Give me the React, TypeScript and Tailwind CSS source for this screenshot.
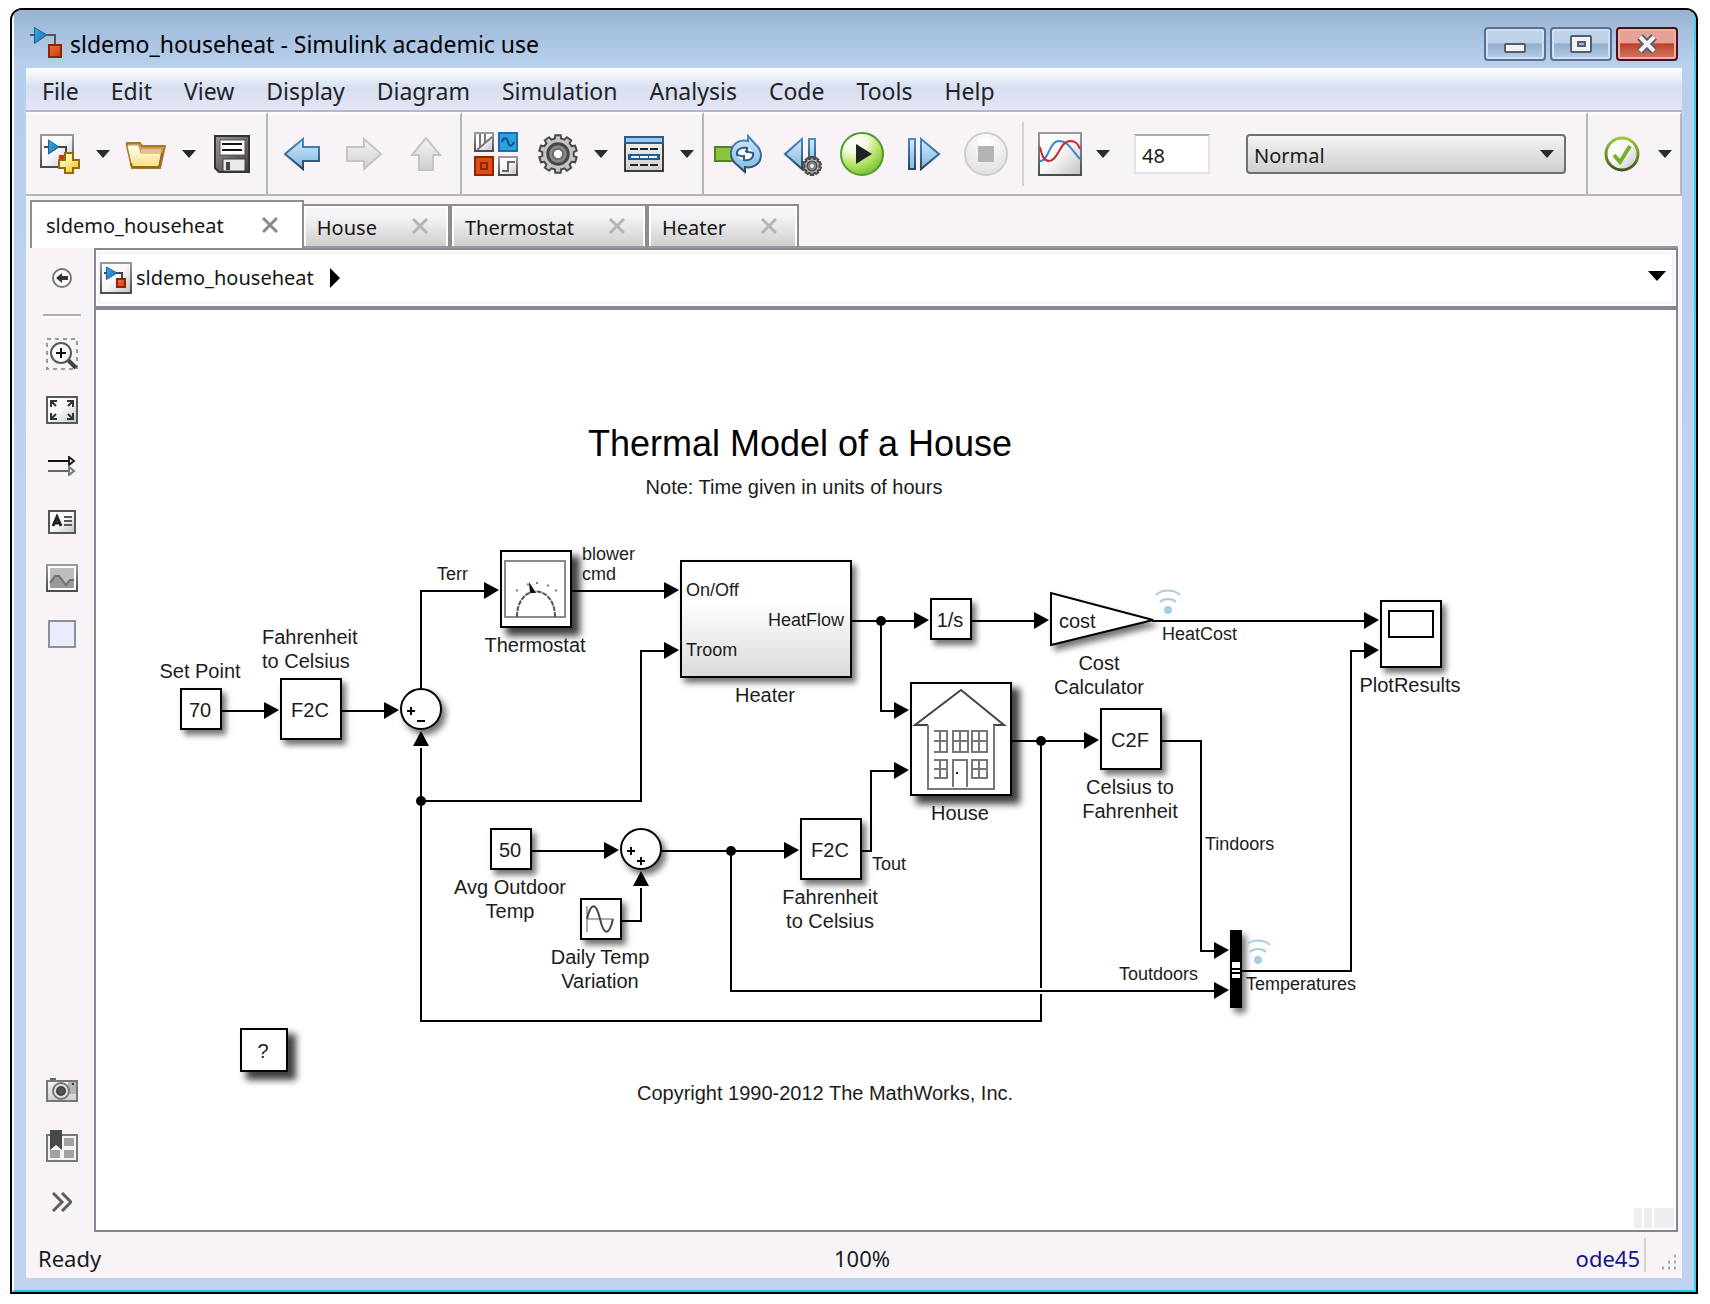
import React from "react";

/* ---------- icons ---------- */

function Defs() {
  return (
    <svg width="0" height="0" className="absolute" aria-hidden="true">
      <defs>
        <linearGradient id="blueV" x1="0" y1="0" x2="0" y2="1">
          <stop offset="0" stopColor="#d3e8f7" />
          <stop offset="1" stopColor="#7fb8e2" />
        </linearGradient>
        <linearGradient id="blueEdge" x1="0" y1="0" x2="0" y2="1">
          <stop offset="0" stopColor="#4a8cc4" />
          <stop offset="1" stopColor="#2c4560" />
        </linearGradient>
        <linearGradient id="blueTri" x1="0" y1="0" x2="1" y2="1">
          <stop offset="0" stopColor="#3fa9e0" />
          <stop offset="1" stopColor="#1a6fb0" />
        </linearGradient>
        <linearGradient id="redSq" x1="0" y1="0" x2="1" y2="1">
          <stop offset="0" stopColor="#f0744a" />
          <stop offset="1" stopColor="#c93c08" />
        </linearGradient>
        <linearGradient id="paper" x1="0" y1="0" x2="1" y2="1">
          <stop offset="0" stopColor="#ffffff" />
          <stop offset="0.5" stopColor="#f7f7f9" />
          <stop offset="1" stopColor="#bfc1c6" />
        </linearGradient>
        <linearGradient id="grayV" x1="0" y1="0" x2="0" y2="1">
          <stop offset="0" stopColor="#f4f4f4" />
          <stop offset="1" stopColor="#cfcfcf" />
        </linearGradient>
        <linearGradient id="darkV" x1="0" y1="0" x2="1" y2="1">
          <stop offset="0" stopColor="#9a9a9a" />
          <stop offset="1" stopColor="#3c3c3c" />
        </linearGradient>
        <linearGradient id="edge" x1="0" y1="0" x2="0" y2="1">
          <stop offset="0" stopColor="#9a9a9c" />
          <stop offset="1" stopColor="#4a4d4c" />
        </linearGradient>
        <linearGradient id="yellow" x1="0" y1="0" x2="1" y2="1">
          <stop offset="0" stopColor="#fffbe0" />
          <stop offset="0.4" stopColor="#fdf0a0" />
          <stop offset="1" stopColor="#f5b800" />
        </linearGradient>
        <linearGradient id="folder" x1="0" y1="0" x2="0" y2="1">
          <stop offset="0" stopColor="#fffef0" />
          <stop offset="1" stopColor="#f8e07c" />
        </linearGradient>
        <radialGradient id="green" cx="0.3" cy="0.15" r="0.95">
          <stop offset="0" stopColor="#ffffff" />
          <stop offset="0.35" stopColor="#f0fada" />
          <stop offset="0.65" stopColor="#b4e264" />
          <stop offset="1" stopColor="#6cb82c" />
        </radialGradient>
        <radialGradient id="grayBall" cx="0.5" cy="0.2" r="0.9">
          <stop offset="0" stopColor="#ffffff" />
          <stop offset="1" stopColor="#dcdcdc" />
        </radialGradient>
        <linearGradient id="checkRing" x1="0" y1="0" x2="0" y2="1">
          <stop offset="0" stopColor="#9ccb3c" />
          <stop offset="1" stopColor="#3c5a14" />
        </linearGradient>
      </defs>
    </svg>
  );
}

type IconProps = { w: number; h: number; children: React.ReactNode };
const Icon = ({ w, h, children }: IconProps) => (
  <svg width={w} height={h} viewBox={`0 0 ${w} ${h}`} fill="none" className="block shrink-0" aria-hidden="true">
    {children}
  </svg>
);

const ModelIcon = () => (
  <Icon w={32} h={32}>
    <path d="M0 9h5M16 9h9v10" stroke="#555" strokeWidth="2" />
    <path d="M4.500 1.500v16L17 9z" fill="url(#blueTri)" stroke="#1c6298" />
    <rect x="19" y="19" width="12" height="12" fill="url(#redSq)" stroke="#8c2405" strokeWidth="2" />
  </Icon>
);

const BoxedModelIcon = () => (
  <Icon w={32} h={32}>
    <rect x="1" y="1" width="30" height="30" fill="url(#paper)" stroke="url(#edge)" strokeWidth="2" />
    <path d="M4 11h4M16 11h6v6" stroke="#444" strokeWidth="2" />
    <path d="M6.500 5v12.500L17 11z" fill="url(#blueTri)" stroke="#1c6298" />
    <rect x="17" y="17" width="8" height="8" fill="url(#redSq)" stroke="#8c2405" strokeWidth="2" />
  </Icon>
);

const NewModelIcon = () => (
  <Icon w={40} h={40}>
    <rect x="1" y="1" width="32" height="32" fill="url(#paper)" stroke="url(#edge)" strokeWidth="2" />
    <path d="M4 13h5M18 13h8v8" stroke="#444" strokeWidth="2" />
    <path d="M8.500 6v14L19 13z" fill="url(#blueTri)" stroke="#1c6298" />
    <path d="M19 21h5v4h-5z" fill="#c93c08" />
    <path d="M25 19h8v7h6v8h-6v5h-8v-5h-6v-8h6z" fill="url(#yellow)" stroke="#95670f" strokeWidth="2" />
  </Icon>
);

const Caret = () => (
  <Icon w={14} h={8}>
    <path d="M0 0h14L7 8z" fill="#2a2a2a" />
  </Icon>
);

const FolderIcon = () => (
  <Icon w={40} h={40}>
    <path d="M1 9h13l2 3h23l-5 22H6L1 12z" fill="#c99a5a" stroke="#a97a2c" strokeWidth="2" />
    <path d="M15 15h20v4H15z" fill="#e4c08e" />
    <path d="M2 12h10l2 8h21l-3 13H7z" fill="url(#folder)" stroke="#fff7cc" />
    <path d="M33 33H6l-1-4M33 33l3-14" stroke="#8f6a20" strokeWidth="2" />
  </Icon>
);

const SaveIcon = () => (
  <Icon w={40} h={40}>
    <path d="M3 2h34v36H7l-4-4z" fill="url(#darkV)" stroke="#333" strokeWidth="2" />
    <path d="M8 6h25v15H8z" fill="#fff" stroke="#555" />
    <path d="M10 10h20M10 16h20" stroke="#111" strokeWidth="2" />
    <path d="M11 25h22v12H11z" fill="#e9e9e9" stroke="#444" />
    <path d="M14 28h4v8h-4z" fill="#444" />
  </Icon>
);

const BackIcon = () => (
  <Icon w={36} h={36}>
    <path d="M1 18L19 3v8h16v14H19v8z" fill="url(#blueV)" stroke="url(#blueEdge)" strokeWidth="2" />
  </Icon>
);
const ForwardIcon = () => (
  <Icon w={36} h={36}>
    <path d="M35 18L18 3v8H1v14h17v8z" fill="url(#grayV)" stroke="#c4c4c4" strokeWidth="2" />
  </Icon>
);
const UpIcon = () => (
  <Icon w={36} h={36}>
    <path d="M18 2L4 19h7v15h14V19h7z" fill="url(#grayV)" stroke="#c4c4c4" strokeWidth="2" />
  </Icon>
);

const LibraryIcon = () => (
  <Icon w={44} h={44}>
    <rect x="1" y="1" width="18" height="18" fill="url(#paper)" stroke="url(#edge)" strokeWidth="2" />
    <path d="M6 2v13M11 2v9M3 18L18 5" stroke="#777" strokeWidth="2" />
    <rect x="25" y="1" width="18" height="18" fill="#2fa0dc" stroke="#1b6fae" strokeWidth="2" />
    <path d="M28 10c1-5 5-5 6 0s4 5 6 0" stroke="#0d4f86" strokeWidth="2" />
    <rect x="1" y="25" width="18" height="18" fill="#dc4c14" stroke="#8f2606" strokeWidth="2" />
    <rect x="7" y="31" width="6" height="6" stroke="#8f2606" strokeWidth="2" />
    <rect x="25" y="25" width="18" height="18" fill="url(#paper)" stroke="url(#edge)" strokeWidth="2" />
    <path d="M28 39h6v-9h7" stroke="#666" strokeWidth="2" />
  </Icon>
);

function Gear({ cx, cy, r }: { cx: number; cy: number; r: number }) {
  const n = 10;
  const pts: string[] = [];
  for (let i = 0; i < n; i++) {
    const a = (i * 2 * Math.PI) / n;
    [
      [-0.2, 0.83],
      [-0.14, 1],
      [0.14, 1],
      [0.2, 0.83],
    ].forEach(([d, k]) => pts.push(`${(cx + r * k * Math.sin(a + d)).toFixed(1)},${(cy - r * k * Math.cos(a + d)).toFixed(1)}`));
  }
  return (
    <g>
      <polygon points={pts.join(" ")} fill="#c4c4c4" stroke="#4a4a4a" strokeWidth="2" />
      <circle cx={cx} cy={cy} r={r * 0.54} fill="#8a8a8a" stroke="#474747" strokeWidth={r * 0.16} />
      <circle cx={cx} cy={cy} r={r * 0.27} fill="#fff" stroke="#666" strokeWidth={r * 0.1} />
    </g>
  );
}

const GearIcon = () => (
  <Icon w={40} h={40}>
    <Gear cx={20} cy={20} r={19} />
  </Icon>
);

const ConfigIcon = () => (
  <Icon w={40} h={36}>
    <rect x="1" y="1" width="38" height="34" fill="url(#grayV)" stroke="#3c3c3c" strokeWidth="2" />
    <rect x="1" y="1" width="38" height="6" fill="#9cc8ea" stroke="#2e5f8c" strokeWidth="2" />
    <path d="M6 13h28M6 29h28" stroke="#222" strokeWidth="2" strokeDasharray="8 2" />
    <rect x="4" y="18" width="32" height="6" fill="#1c5c98" />
    <path d="M7 21h26" stroke="#fff" strokeWidth="2" strokeDasharray="8 1" />
  </Icon>
);

const UpdateIcon = () => (
  <Icon w={48} h={40}>
    <rect x="1" y="13" width="20" height="14" fill="#8cc63f" stroke="#4f8420" strokeWidth="2" />
    <path
      d="M34 2l8 9c7 6 6 16 0 20-3 2-7 3-11 2v5l-10-9c-6-6-5-15 1-20 4-3 8-3 12-2z"
      fill="url(#blueV)"
      stroke="url(#blueEdge)"
      strokeWidth="2"
    />
    <ellipse cx="31" cy="20" rx="8" ry="6" fill="#fff" />
    <path d="M31 23l-8-2c-1-5 3-8 10-7v5" stroke="#2d5d8a" strokeWidth="2" />
    <path d="M31 17l8 2c1 5-3 8-9 7v-5" stroke="#2d5d8a" strokeWidth="2" />
  </Icon>
);

const StepBackIcon = () => (
  <Icon w={46} h={44}>
    <path d="M24 7v30L7 22z" fill="url(#blueV)" stroke="url(#blueEdge)" strokeWidth="2" />
    <rect x="31" y="7" width="6" height="28" fill="url(#blueV)" stroke="url(#blueEdge)" strokeWidth="2" />
    <Gear cx={34} cy={34} r={9} />
  </Icon>
);

const PlayIcon = () => (
  <Icon w={44} h={44}>
    <circle cx="22" cy="22" r="21" fill="url(#green)" stroke="#4f9a2a" strokeWidth="2" />
    <path d="M16 12v20l16-10z" fill="#222" />
  </Icon>
);

const StepForwardIcon = () => (
  <Icon w={48} h={44}>
    <rect x="9" y="7" width="6" height="30" fill="url(#blueV)" stroke="url(#blueEdge)" strokeWidth="2" />
    <path d="M21 7v30l18-15z" fill="url(#blueV)" stroke="url(#blueEdge)" strokeWidth="2" />
  </Icon>
);

const StopIcon = () => (
  <Icon w={44} h={44}>
    <circle cx="22" cy="22" r="21" fill="url(#grayBall)" stroke="#cdcdcd" strokeWidth="2" />
    <rect x="14" y="14" width="16" height="16" fill="#b3b3b5" />
  </Icon>
);

const ScopeIcon = () => (
  <Icon w={44} h={44}>
    <rect x="1" y="1" width="42" height="42" fill="url(#paper)" stroke="url(#edge)" strokeWidth="2" />
    <path d="M2 29c9 0 9-20 19-20 9 0 12 8 21 18" stroke="#3d86cc" strokeWidth="2" />
    <path d="M2 15c2 9 4 14 9 14 9 0 11-20 21-20 6 0 8 3 10 8" stroke="#c42a32" strokeWidth="2" />
  </Icon>
);

const CheckIcon = () => (
  <Icon w={36} h={36}>
    <circle cx="18" cy="18" r="16" fill="url(#paper)" stroke="url(#checkRing)" strokeWidth="3" />
    <path d="M10 19l6 7 10-16" stroke="#76b02c" strokeWidth="4" />
  </Icon>
);

const CloseX = ({ dark }: { dark?: boolean }) => (
  <Icon w={16} h={16}>
    <path d="M1 1l14 14M15 1L1 15" stroke={dark ? "#8a8a8a" : "#b4b4b4"} strokeWidth="3" />
  </Icon>
);

const HideBrowserIcon = () => (
  <Icon w={32} h={32}>
    <circle cx="16" cy="16" r="9" fill="#fff" stroke="#777" strokeWidth="2" />
    <path d="M10 16l6-5v3h6v4h-6v3z" fill="#333" />
  </Icon>
);
const ZoomIcon = () => (
  <Icon w={32} h={32}>
    <rect x="1" y="1" width="30" height="30" stroke="#999" strokeWidth="2" strokeDasharray="4 4" />
    <path d="M22 22l8 8" stroke="#3f4442" strokeWidth="4" />
    <circle cx="15" cy="15" r="10" fill="#fbfbfc" stroke="#555a58" strokeWidth="2" />
    <path d="M10 15h10M15 10v10" stroke="#111" strokeWidth="2" />
  </Icon>
);
const FitIcon = () => (
  <Icon w={32} h={28}>
    <rect x="1" y="1" width="30" height="26" fill="url(#paper)" stroke="#555a58" strokeWidth="2" />
    <path d="M5 11V5h6M5 5l5 5M21 5h6v6M27 5l-5 5M5 17v6h6M5 23l5-5M27 17v6h-6M27 23l-5-5" stroke="#333" strokeWidth="2" />
  </Icon>
);
const SignalsIcon = () => (
  <Icon w={28} h={20}>
    <path d="M0 5h20" stroke="#111" strokeWidth="2" />
    <path d="M0 15h20" stroke="#666" strokeWidth="2" />
    <path d="M21 1l5 4-5 4z" stroke="#222" strokeWidth="2" />
    <path d="M21 11l5 4-5 4z" stroke="#777" strokeWidth="2" />
  </Icon>
);
const AnnotationIcon = () => (
  <Icon w={28} h={24}>
    <rect x="1" y="1" width="26" height="22" fill="url(#paper)" stroke="#555" strokeWidth="2" />
    <path d="M5 16l4-9 4 9M6 13h6" stroke="#222" strokeWidth="3" />
    <path d="M16 7h8M16 11h8M16 15h8" stroke="#555" strokeWidth="2" />
  </Icon>
);
const ImageIcon = () => (
  <Icon w={32} h={28}>
    <rect x="1" y="1" width="30" height="26" fill="#fff" stroke="url(#edge)" strokeWidth="2" />
    <rect x="4" y="4" width="24" height="20" fill="#bdbdbd" />
    <path d="M4 19l5-7h4l7 9 4-5h4v8H4z" fill="#9a9a9a" />
    <path d="M4 19l5-7h4l7 9 4-5h4" stroke="#6f6f6f" strokeWidth="2" />
  </Icon>
);
const AreaIcon = () => (
  <Icon w={28} h={28}>
    <rect x="1" y="1" width="26" height="26" fill="#ebebff" stroke="#8f9094" strokeWidth="2" />
  </Icon>
);
const CameraIcon = () => (
  <Icon w={32} h={26}>
    <path d="M4 2h6" stroke="#666" strokeWidth="2" />
    <rect x="1" y="4" width="30" height="20" fill="url(#grayV)" stroke="#777" strokeWidth="2" />
    <path d="M22 5h8v12h-8z" fill="#b4b4b4" />
    <circle cx="15" cy="14" r="8" fill="#ddd" stroke="#777" strokeWidth="2" />
    <circle cx="15" cy="14" r="4" fill="#555" stroke="#444" strokeWidth="2" />
    <path d="M26 7h2" stroke="#333" strokeWidth="2" />
  </Icon>
);
const BookmarkIcon = () => (
  <Icon w={32} h={32}>
    <rect x="1" y="5" width="30" height="26" fill="#f4f4f6" stroke="#777" strokeWidth="2" />
    <path d="M18 8h10v8H18zM18 20h10v8H18zM4 20h10v8H4z" fill="#a3a0a3" />
    <path d="M4 0h12v20l-6-5-6 5z" fill="#454a48" />
  </Icon>
);
const MoreIcon = () => (
  <Icon w={20} h={20}>
    <path d="M1 1l9 9-9 9M10 1l9 9-9 9" stroke="#5a5e5c" strokeWidth="3" />
  </Icon>
);

/* ---------- diagram ---------- */

const ORIGIN_X = 96;
const ORIGIN_Y = 310;

type BlockData = { x: number; y: number; w: number; h: number; text?: string; deep?: boolean; shaded?: boolean };
const blocks: BlockData[] = [
  { x: 180, y: 688, w: 42, h: 42, text: "70" },
  { x: 280, y: 678, w: 62, h: 62, text: "F2C" },
  { x: 500, y: 550, w: 72, h: 78, deep: true },
  { x: 680, y: 560, w: 172, h: 118, shaded: true },
  { x: 930, y: 598, w: 42, h: 42, text: "1/s" },
  { x: 1380, y: 600, w: 62, h: 68 },
  { x: 910, y: 682, w: 102, h: 114, deep: true },
  { x: 1100, y: 708, w: 62, h: 62, text: "C2F" },
  { x: 490, y: 828, w: 42, h: 42, text: "50" },
  { x: 800, y: 818, w: 62, h: 62, text: "F2C" },
  { x: 580, y: 898, w: 42, h: 42 },
  { x: 240, y: 1028, w: 48, h: 44, text: "?", deep: true },
];

function Block({ x, y, w, h, text, deep, shaded }: BlockData) {
  return (
    <div
      className={
        "absolute flex items-center justify-center border-2 border-black pr-0.5 pt-0.5 text-[20px] leading-6 " +
        (shaded ? "bg-gradient-to-b from-white from-35% to-[#dadada] " : "bg-white ") +
        (deep ? "shadow-[7px_7px_7px_1px_rgba(0,0,0,0.75)]" : "shadow-[4px_5px_6px_rgba(0,0,0,0.55)]")
      }
      style={{ left: x - ORIGIN_X, top: y - ORIGIN_Y, width: w, height: h }}
    >
      {text}
    </div>
  );
}

/* x is the centre for block names, the left edge for signal names; y is the middle of the first line */
type LabelData = { x: number; y: number; lines: string[] };
const blockNames: LabelData[] = [
  { x: 200, y: 671, lines: ["Set Point"] },
  { x: 535, y: 645, lines: ["Thermostat"] },
  { x: 765, y: 695, lines: ["Heater"] },
  { x: 1099, y: 663, lines: ["Cost", "Calculator"] },
  { x: 1410, y: 685, lines: ["PlotResults"] },
  { x: 960, y: 813, lines: ["House"] },
  { x: 1130, y: 787, lines: ["Celsius to", "Fahrenheit"] },
  { x: 510, y: 887, lines: ["Avg Outdoor", "Temp"] },
  { x: 600, y: 957, lines: ["Daily Temp", "Variation"] },
  { x: 830, y: 897, lines: ["Fahrenheit", "to Celsius"] },
  { x: 794, y: 487, lines: ["Note: Time given in units of hours"] },
  { x: 825, y: 1093, lines: ["Copyright 1990-2012 The MathWorks, Inc."] },
];
const signalNames: LabelData[] = [
  { x: 437, y: 574, lines: ["Terr"] },
  { x: 582, y: 554, lines: ["blower", "cmd"] },
  { x: 686, y: 590, lines: ["On/Off"] },
  { x: 768, y: 620, lines: ["HeatFlow"] },
  { x: 686, y: 650, lines: ["Troom"] },
  { x: 1162, y: 634, lines: ["HeatCost"] },
  { x: 872, y: 864, lines: ["Tout"] },
  { x: 1205, y: 844, lines: ["Tindoors"] },
  { x: 1119, y: 974, lines: ["Toutdoors"] },
  { x: 1246, y: 984, lines: ["Temperatures"] },
];

const rightArrows = [
  [279, 710], [399, 710], [499, 590], [679, 590], [679, 650], [929, 620], [1049, 620], [1379, 620],
  [1379, 650], [909, 710], [909, 770], [1099, 740], [1229, 950], [1229, 990], [619, 850], [799, 850],
];
const upArrows = [[421, 731], [641, 871]];
const dots = [[421, 801], [881, 621], [1041, 741], [731, 851]];

function LogBadge({ x, y }: { x: number; y: number }) {
  return (
    <g transform={`translate(${x} ${y})`} stroke="#a9cbe0" strokeWidth="2" fill="none">
      <path d="M-12 5C-6-1 6-1 12 5M-8 12C-4 8 4 8 8 12" />
      <circle cx="0" cy="20" r="4" fill="#a9cbe0" stroke="none" />
    </g>
  );
}

function WindowPane({ x, y, h }: { x: number; y: number; h: number }) {
  return <path d={`M${x} ${y}h15v${h}h-15zM${x + 7} ${y}v${h}M${x} ${y + Math.floor(h / 2)}h15`} />;
}

function Diagram() {
  return (
    <div className="relative h-full w-full overflow-hidden bg-white font-['Liberation_Sans',Arial,sans-serif] text-[#1c1c1c]">
      {blocks.map((b, i) => (
        <Block key={i} {...b} />
      ))}
      <svg
        className="absolute left-0 top-0"
        width="1582"
        height="920"
        viewBox="96 310 1582 920"
        fill="none"
        role="img"
        aria-label="Signal lines of the house heating model"
      >
        <defs>
          <filter id="soft" x="-30%" y="-30%" width="170%" height="170%">
            <feDropShadow dx="4" dy="5" stdDeviation="3" floodOpacity="0.55" />
          </filter>
        </defs>
        <g stroke="#000" strokeWidth="2" fill="#fff" filter="url(#soft)">
          <circle cx="421" cy="709" r="20" />
          <circle cx="641" cy="849" r="20" />
          <path d="M1051 593v52L1153 620z" />
          <path d="M1231 931h10v76h-10z" fill="#000" />
        </g>
        <path d="M1232 962h8v6h-8zM1232 970h8v2h-8zM1232 974h8v4h-8z" fill="#fff" />
        <g stroke="#000" strokeWidth="2">
          <path d="M222 711h44M342 711h44M421 690v-99h65M572 591h94M421 748v273h620v-27M1041 988V741M421 801h220V651h25" />
          <path d="M852 621h64M881 621v90h15M972 621h64M1152 621h214M1012 741h74M1162 741h39v210h15" />
          <path d="M532 851h74M622 921h19v-33M662 851h124M731 851v140h485M862 851h9v-80h25M1242 971h109V651h15" />
          <path d="M407 711h8M411 707v8M417 721h8M627 851h8M631 847v8M637 861h8M641 857v8" />
          <path d="M1389 611h44v26h-44z" />
        </g>
        <g fill="#000">
          {rightArrows.map(([x, y]) => (
            <path key={`${x}-${y}`} d={`M${x} ${y}l-15-8v17z`} />
          ))}
          {upArrows.map(([x, y]) => (
            <path key={`${x}-${y}`} d={`M${x} ${y}l-8 15h16z`} />
          ))}
          {dots.map(([x, y]) => (
            <circle key={`${x}-${y}`} cx={x} cy={y} r="5" />
          ))}
        </g>

        <rect x="505" y="561" width="60" height="56" stroke="#8a8a8a" strokeWidth="2" />
        <path d="M517 617c0-34 38-34 38 0" stroke="#555" strokeWidth="2" strokeDasharray="5 1" />
        <path d="M516 591l2-1M527 584l2 1M536 583h2M547 585l2 1M555 590l2 1" stroke="#888" strokeWidth="2" />
        <path d="M529 582l1 11h6z" fill="#111" />

        <path d="M928 725h-13l46-35 43 35h-11" stroke="#444" strokeWidth="2" />
        <path d="M928 725v64h66v-64" stroke="#777" strokeWidth="2" />
        <g stroke="#777" strokeWidth="2">
          <path d="M934 731h13v21h-13M940 731v21M934 741h13" />
          <WindowPane x={953} y={731} h={21} />
          <WindowPane x={972} y={731} h={21} />
          <path d="M934 760h13v18h-13M940 760v18M934 769h13" />
          <WindowPane x={972} y={760} h={18} />
          <path d="M953 787v-27h14v27" />
          <path d="M956 773h2" stroke="#111" />
        </g>

        <path d="M587 906v26M587 919h26" stroke="#aaa" strokeWidth="2" />
        <path d="M587 919c4-17 9-17 13 0s9 17 13 0" stroke="#444" strokeWidth="2" />

        <LogBadge x={1168} y={590} />
        <LogBadge x={1258} y={940} />
      </svg>

      <h1
        className="absolute -translate-x-1/2 whitespace-nowrap text-[36px] leading-10 text-black"
        style={{ left: 800 - ORIGIN_X, top: 424 - ORIGIN_Y }}
      >
        Thermal Model of a House
      </h1>
      {blockNames.map((l) => (
        <div
          key={`${l.x}-${l.y}`}
          className="absolute -translate-x-1/2 whitespace-nowrap text-center text-[20px] leading-6"
          style={{ left: l.x - ORIGIN_X, top: l.y - 12 - ORIGIN_Y }}
        >
          {l.lines.map((t) => (
            <div key={t}>{t}</div>
          ))}
        </div>
      ))}
      <div
        className="absolute whitespace-nowrap text-[20px] leading-6"
        style={{ left: 262 - ORIGIN_X, top: 625 - ORIGIN_Y }}
      >
        <div>Fahrenheit</div>
        <div>to Celsius</div>
      </div>
      {signalNames.map((l) => (
        <div
          key={`${l.x}-${l.y}`}
          className="absolute whitespace-nowrap text-[18px] leading-5"
          style={{ left: l.x - ORIGIN_X, top: l.y - 10 - ORIGIN_Y }}
        >
          {l.lines.map((t) => (
            <div key={t}>{t}</div>
          ))}
        </div>
      ))}
      <div
        className="absolute whitespace-nowrap text-[20px] leading-6"
        style={{ left: 1059 - ORIGIN_X, top: 609 - ORIGIN_Y }}
      >
        cost
      </div>

      <div className="absolute bottom-0.5 right-0.5 flex h-5 gap-0.5">
        <div className="w-2 bg-[#eeeeee]" />
        <div className="w-2 bg-[#eeeeee]" />
        <div className="w-5 bg-[#eeeeee]" />
      </div>
    </div>
  );
}

/* ---------- window chrome ---------- */

const ToolButton = ({ label, children }: { label: string; children: React.ReactNode }) => (
  <button type="button" aria-label={label} className="flex shrink-0 items-center">
    {children}
  </button>
);

const section = "flex items-center border-r-2 border-t-2 border-r-[#b6b5b9] border-t-white ";

function Toolbar() {
  return (
    <div className="flex h-[84px] shrink-0 border-b-2 border-[#b6b5b9]">
      <div className={section + "gap-4 px-[14px]"}>
        <ToolButton label="New model"><NewModelIcon /></ToolButton>
        <ToolButton label="New options"><Caret /></ToolButton>
        <ToolButton label="Open"><FolderIcon /></ToolButton>
        <ToolButton label="Open options"><Caret /></ToolButton>
        <ToolButton label="Save"><SaveIcon /></ToolButton>
      </div>
      <div className={section + "gap-[26px] px-4"}>
        <ToolButton label="Back"><BackIcon /></ToolButton>
        <ToolButton label="Forward"><ForwardIcon /></ToolButton>
        <ToolButton label="Up to parent"><UpIcon /></ToolButton>
      </div>
      <div className={section + "gap-4 pl-3 pr-2"}>
        <div className="flex items-center gap-5">
          <ToolButton label="Library browser"><LibraryIcon /></ToolButton>
          <ToolButton label="Model configuration"><GearIcon /></ToolButton>
        </div>
        <ToolButton label="Configuration options"><Caret /></ToolButton>
        <ToolButton label="Model explorer"><ConfigIcon /></ToolButton>
        <ToolButton label="Explorer options"><Caret /></ToolButton>
      </div>
      <div className={section + "min-w-0 flex-1 pl-[10px] pr-5"}>
        <div className="flex items-center gap-4">
          <ToolButton label="Update diagram"><UpdateIcon /></ToolButton>
          <ToolButton label="Step back"><StepBackIcon /></ToolButton>
          <ToolButton label="Run"><PlayIcon /></ToolButton>
          <ToolButton label="Step forward"><StepForwardIcon /></ToolButton>
          <ToolButton label="Stop"><StopIcon /></ToolButton>
        </div>
        <div className="ml-[14px] flex items-center gap-[14px]">
          <div className="h-16 w-0.5 bg-[#d4d2d6]" />
          <ToolButton label="Simulation data inspector"><ScopeIcon /></ToolButton>
          <ToolButton label="Inspector options"><Caret /></ToolButton>
        </div>
        <input
          aria-label="Stop time"
          defaultValue="48"
          className="ml-6 h-10 w-[76px] border-2 border-[#e2e3ea] border-t-[#abadb3] bg-white px-1.5 pt-0.5 text-[20px] leading-6 outline-none"
        />
        <div className="relative ml-9 min-w-0 flex-1">
          <select
            aria-label="Simulation mode"
            className="block h-10 w-full appearance-none rounded border-2 border-[#707070] bg-gradient-to-b from-[#f4f3f4] to-[#cfcfcf] px-1.5 pt-1 text-[20px] leading-6 outline-none"
          >
            <option>Normal</option>
            <option>Accelerator</option>
          </select>
          <div className="pointer-events-none absolute right-3 top-4">
            <Caret />
          </div>
        </div>
      </div>
      <div className={section + "gap-[18px] pl-4 pr-2"}>
        <ToolButton label="Model advisor"><CheckIcon /></ToolButton>
        <ToolButton label="Advisor options"><Caret /></ToolButton>
      </div>
    </div>
  );
}

function Tabs() {
  return (
    <div className="flex h-[52px] shrink-0 items-end pl-1 text-[20px] leading-6 text-[#161616]">
      <div className="z-10 flex h-12 items-center gap-[38px] border-x-2 border-t-2 border-[#8c8d92] bg-white pl-[14px] pr-6">
        <button type="button" className="pt-0.5">sldemo_househeat</button>
        <button type="button" aria-label="Close sldemo_househeat"><CloseX dark /></button>
      </div>
      {["House", "Thermostat", "Heater"].map((name) => (
        <div
          key={name}
          className="flex h-11 items-center gap-[35px] border-2 border-[#8c8d92] border-b-[#98989c] bg-gradient-to-b from-[#f6f3f6] from-25% to-[#cfcfcf] pl-[13px] pr-5 shadow-[inset_2px_2px_0_#fff,inset_-2px_0_0_#fff] first-of-type:ml-0 [&:nth-child(2)]:-ml-0.5"
        >
          <button type="button" className="pt-1">{name}</button>
          <button type="button" aria-label={`Close ${name}`}><CloseX /></button>
        </div>
      ))}
      <div className="mr-1 h-0.5 flex-1 bg-[#98989c]" />
    </div>
  );
}

function Sidebar() {
  const slot = "flex h-14 w-full items-center justify-center";
  return (
    <div className="flex w-[68px] shrink-0 flex-col items-center pb-0.5 pl-1">
      <button type="button" aria-label="Hide browser" className="mt-0.5 flex h-14 w-full items-center justify-center"><HideBrowserIcon /></button>
      <div className="mb-2 mt-2 h-1 w-[38px] border-b-2 border-t-2 border-b-white border-t-[#b0aeb0]" />
      <button type="button" aria-label="Zoom" className={slot}><ZoomIcon /></button>
      <button type="button" aria-label="Fit to view" className={slot}><FitIcon /></button>
      <button type="button" aria-label="Sample time" className={slot}><SignalsIcon /></button>
      <button type="button" aria-label="Annotation" className={slot}><AnnotationIcon /></button>
      <button type="button" aria-label="Image" className={slot}><ImageIcon /></button>
      <button type="button" aria-label="Area" className={slot}><AreaIcon /></button>
      <div className="flex-1" />
      <button type="button" aria-label="Screenshot" className={slot}><CameraIcon /></button>
      <button type="button" aria-label="Model browser" className={slot}><BookmarkIcon /></button>
      <button type="button" aria-label="More tools" className={slot}><MoreIcon /></button>
    </div>
  );
}

const captionButton =
  "flex h-[34px] w-[62px] items-center justify-center rounded border-2 border-[#5d6f8e] bg-gradient-to-b from-[#bdd2e8] from-45% via-[#94aecd] via-50% to-[#b3d0ea] shadow-[inset_0_0_0_2px_#cfe0f2]";

const menus = ["File", "Edit", "View", "Display", "Diagram", "Simulation", "Analysis", "Code", "Tools", "Help"];

export default function App() {
  return (
    <div className="flex min-h-screen bg-white pb-[10px] pl-[10px] pr-3 pt-2 font-['Noto_Sans','Open_Sans',sans-serif]">
      <Defs />
      <div className="flex min-w-0 flex-1 flex-col overflow-hidden rounded-t-xl border-2 border-black bg-[#bdd3f0]">
        <div className="flex flex-1 flex-col border-b-2 border-l-2 border-r-2 border-b-[#26c6dc] border-l-white border-r-[#35d3ee] bg-gradient-to-b from-[#b6cfed] to-[#bdd3f0] to-40%">
          <header className="flex h-[58px] shrink-0 items-center bg-gradient-to-b from-[#98b3d1] via-[#a6c0df] via-40% to-[#b9d1ee] pl-4 pr-4">
            <div className="pt-1.5"><ModelIcon /></div>
            <div className="ml-2 flex-1 pt-2.5 text-[23px] leading-8 text-black">sldemo_househeat - Simulink academic use</div>
            <div className="flex gap-1 pt-2.5">
              <button type="button" aria-label="Minimize" className={captionButton}>
                <Icon w={22} h={22}>
                  <rect x="1" y="11" width="20" height="8" rx="1" fill="#f2f2f2" stroke="#565d6c" strokeWidth="2" />
                </Icon>
              </button>
              <button type="button" aria-label="Maximize" className={captionButton}>
                <Icon w={22} h={22}>
                  <rect x="1" y="3" width="20" height="16" rx="1" fill="#f2f2f2" stroke="#565d6c" strokeWidth="2" />
                  <rect x="8" y="9" width="7" height="4" fill="#9fb9d6" stroke="#565d6c" strokeWidth="2" />
                </Icon>
              </button>
              <button
                type="button"
                aria-label="Close"
                className="flex h-[34px] w-[62px] items-center justify-center rounded border-2 border-[#4a1020] bg-gradient-to-b from-[#e6a194] from-45% via-[#bd3f28] via-50% to-[#d07a68] shadow-[inset_0_0_0_2px_#eeb0a2]"
              >
                <Icon w={22} h={22}>
                  <path d="M4 4l14 14M18 4L4 18" stroke="#565d6c" strokeWidth="8" />
                  <path d="M4 4l14 14M18 4L4 18" stroke="#f2f2f2" strokeWidth="4" />
                </Icon>
              </button>
            </div>
          </header>

          <div className="mx-3 mb-3 flex min-h-0 flex-1 flex-col bg-[#f7f3f7] text-[#1a1a1a]">
            <nav className="flex h-11 shrink-0 items-center border-b-2 border-[#aeb9cf] bg-gradient-to-b from-white via-[#d7dff0] via-45% to-[#e5e4f4] text-[23px] leading-7 text-[#202428]">
              {menus.map((m) => (
                <button type="button" key={m} className="px-4 pt-1">{m}</button>
              ))}
            </nav>
            <Toolbar />
            <Tabs />
            <div className="flex min-h-0 flex-1">
              <Sidebar />
              <main className="mr-1 flex min-w-0 flex-1 flex-col border-2 border-[#848694]">
                <div className="flex h-[60px] shrink-0 items-center border-b-4 border-[#848694] bg-white pl-1 pr-2.5 shadow-[inset_0_0_0_2px_#fff,inset_0_0_0_4px_#f7f1f4]">
                  <BoxedModelIcon />
                  <span className="ml-1 text-[20px] leading-6 text-[#161616]">sldemo_househeat</span>
                  <span className="ml-4 flex-1">
                    <Icon w={10} h={20}>
                      <path d="M0 0l10 10L0 20z" fill="#000" />
                    </Icon>
                  </span>
                  <button type="button" aria-label="Path history" className="pb-1">
                    <Icon w={18} h={10}>
                      <path d="M0 0h18L9 10z" fill="#000" />
                    </Icon>
                  </button>
                </div>
                <div className="min-h-[800px] flex-1">
                  <Diagram />
                </div>
              </main>
            </div>
            <footer className="grid h-[46px] shrink-0 grid-cols-[1fr_auto_1fr] items-center pl-3 pr-1 text-[22px] leading-7">
              <span className="pt-1.5">Ready</span>
              <span className="pl-2 pt-1.5">100%</span>
              <div className="flex items-center justify-end gap-1">
                <span className="pt-1.5 text-[#15158a]">ode45</span>
                <div className="h-[34px] w-0.5 bg-[#d4d2d6]" />
                <div className="self-end pl-2.5">
                  <Icon w={18} h={18}>
                    <path d="M14 2h2M8 8h2M14 8h2M2 14h2M8 14h2M14 14h2" stroke="#aaa" strokeWidth="3" />
                  </Icon>
                </div>
              </div>
            </footer>
          </div>
        </div>
      </div>
    </div>
  );
}
